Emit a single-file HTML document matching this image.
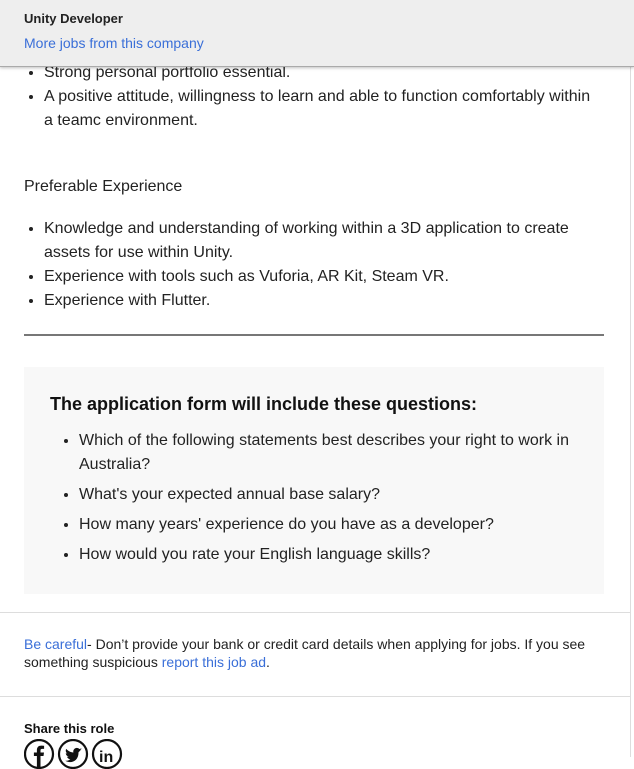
<!DOCTYPE html>
<html><head><style>
*{box-sizing:border-box}
body{margin:0;width:634px;height:757px;overflow:hidden;font-family:"Liberation Sans",Arial,sans-serif;color:#222;background:#fff;position:relative}
.main{position:absolute;left:0;top:0;width:631px;height:757px;border-right:1px solid #ddd}
.hdr{position:absolute;left:0;top:0;width:634px;height:67px;background:#eee;border-bottom:1px solid #aaa;box-shadow:0 1px 3px rgba(0,0,0,.25);z-index:2}
.hdr .t{position:absolute;left:24px;top:11px;font-size:13px;font-weight:bold;color:#222}
.hdr .l{position:absolute;left:24px;top:35px;font-size:14px;color:#3a6fd8}
ul{margin:0;padding:0 0 0 44px;font-size:16px;line-height:24px}
.a{position:absolute;left:0;top:61px;width:600px}
.p{position:absolute;left:24px;top:175px;font-size:16px;line-height:24px}
.b{position:absolute;left:0;top:217px;width:600px}
.hr{position:absolute;left:24px;top:334px;width:580px;height:2px;background:#777}
.box{position:absolute;left:24px;top:367px;width:580px;height:227px;background:#f8f8f8}
.h{position:absolute;left:50px;top:394px;font-size:18px;font-weight:bold;color:#111}
.q{position:absolute;left:35px;top:429px;width:540px}
.q li{margin-bottom:6px}
.l1{position:absolute;left:0;top:612px;width:631px;height:1px;background:#ddd}
.l2{position:absolute;left:0;top:696px;width:631px;height:1px;background:#ddd}
.w{position:absolute;left:24px;top:635px;font-size:14px;line-height:18px;width:585px;color:#222}
a{color:#3a6fd8;text-decoration:none}
.s{position:absolute;left:24px;top:721px;font-size:13px;font-weight:bold;color:#111}
.ic{position:absolute;top:739px}
</style></head><body>
<div class="main"></div>
<div class="hdr"><div class="t">Unity Developer</div><div class="l">More jobs from this company</div></div>
<ul class="a"><li>Strong personal portfolio essential.</li><li>A positive attitude, willingness to learn and able to function comfortably within a teamc environment.</li></ul>
<div class="p">Preferable Experience</div>
<ul class="b"><li>Knowledge and understanding of working within a 3D application to create assets for use within Unity.</li><li>Experience with tools such as Vuforia, AR Kit, Steam VR.</li><li>Experience with Flutter.</li></ul>
<div class="hr"></div>
<div class="box"></div>
<div class="h">The application form will include these questions:</div>
<ul class="q"><li>Which of the following statements best describes your right to work in Australia?</li><li>What's your expected annual base salary?</li><li>How many years' experience do you have as a developer?</li><li>How would you rate your English language skills?</li></ul>
<div class="l1"></div>
<div class="w"><a>Be careful</a>- Don’t provide your bank or credit card details when applying for jobs. If you see something suspicious <a>report this job ad</a>.</div>
<div class="l2"></div>
<div class="s">Share this role</div>
<svg class="ic" style="left:24px" width="100" height="30" viewBox="0 0 100 30">
<g fill="none" stroke="#111" stroke-width="2.2">
<circle cx="15" cy="15" r="14"/><circle cx="49" cy="15" r="14"/><circle cx="83" cy="15" r="14"/>
</g>
<path d="M16.5 30V17h3l.5-3.5h-3.5v-2c0-1 .4-1.6 1.7-1.6h1.9V6.8c-.4 0-1.5-.2-2.8-.2-2.8 0-4.4 1.6-4.4 4.6v2.3h-3V17h3v13z" fill="#111"/>
<path d="M58 10.5c-.6.3-1.3.5-2 .6.7-.4 1.3-1.1 1.5-1.9-.7.4-1.4.7-2.200.8-1.4-1.5-3.9-1.4-5.2.2-.8.9-1 2.2-.7 3.3-2.8-.1-5.4-1.5-7.2-3.6-.9 1.6-.4 3.6 1.1 4.6-.5 0-1.1-.2-1.5-.4 0 1.700 1.2 3.1 2.8 3.5-.5.1-1.1.2-1.6.1.5 1.4 1.8 2.4 3.3 2.5-1.4 1.1-3.2 1.7-5 1.6 6 3.5 13.5-.1 13.2-8.6.7-.5 1.3-1.1 1.8-1.8z" fill="#111"/>
<text x="75" y="23" font-family="Liberation Sans" font-weight="bold" font-size="16" fill="#111">in</text>
</svg>
</body></html>
